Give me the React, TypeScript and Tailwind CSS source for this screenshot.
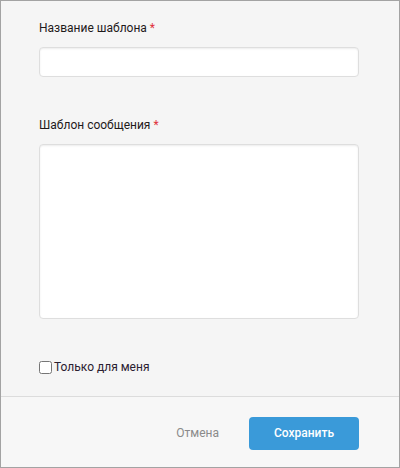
import React from "react";

export default function App() {
  return (
    <div
      className="w-[400px] h-[468px] border border-[#a3a3a3] bg-[#f5f5f5] flex flex-col"
      style={{ fontFamily: "Roboto, 'Liberation Sans', sans-serif" }}
    >
      <div className="flex-1 px-[38px] pt-[19px]">
        <label className="block text-[12px] leading-[16px] text-[#1f1a1a]">
          Название шаблона <span className="text-[#e0313b]">*</span>
        </label>
        <input
          className="mt-[11px] block w-[320px] h-[30px] rounded-[4px] border border-[#dedede] bg-white shadow-[inset_0_1px_2px_rgba(0,0,0,0.08)] outline-none"
        />
        <label className="block mt-[40px] text-[12px] leading-[16px] text-[#1f1a1a]">
          Шаблон сообщения <span className="text-[#e0313b]">*</span>
        </label>
        <textarea
          className="mt-[11px] block w-[320px] h-[175px] rounded-[4px] border border-[#dedede] bg-white shadow-[inset_0_1px_2px_rgba(0,0,0,0.08)] outline-none resize-none"
        />
        <label className="mt-[40px] flex items-center text-[12px] leading-[16px] text-[#2a2030]">
          <input type="checkbox" className="m-0 w-[13px] h-[13px] mr-[2px]" />
          Только для меня
        </label>
      </div>
      <div className="h-[71px] border-t border-[#dcdcdc] bg-[#f7f7f7] flex items-center justify-end pr-[40px] pt-[2px]">
        <button className="text-[12px] text-[#8a8a8a] mr-[30px]">Отмена</button>
        <button className="w-[110px] h-[33px] rounded-[4px] bg-[#3a9ad9] text-white text-[12px] font-medium">
          Сохранить
        </button>
      </div>
    </div>
  );
}
